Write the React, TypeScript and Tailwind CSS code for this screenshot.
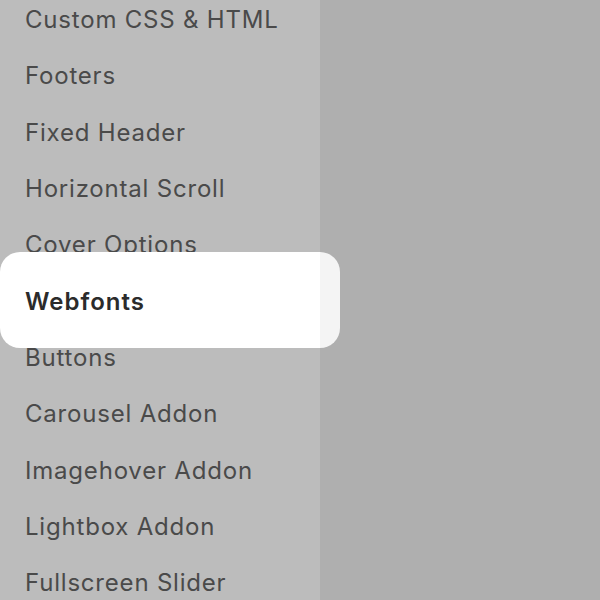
import React from "react";

const items = [
  "Custom CSS & HTML",
  "Footers",
  "Fixed Header",
  "Horizontal Scroll",
  "Cover Options",
  "Webfonts",
  "Buttons",
  "Carousel Addon",
  "Imagehover Addon",
  "Lightbox Addon",
  "Fullscreen Slider",
];

export default function App() {
  return (
    <div
      className="flex h-[600px] w-[600px] overflow-hidden bg-[#afafaf]"
      style={{ fontFamily: "Inter, 'Noto Sans', sans-serif" }}
    >
      <div className="relative w-[320px] shrink-0 bg-[#bcbcbc]">
        <ul className="mt-[-8px] flex flex-col">
          {items.map((t) => (
            <li
              key={t}
              className={`flex h-[56.3px] items-center pl-[25px] text-[24px] tracking-[0.8px] ${
                t === "Webfonts" ? "relative z-10 font-semibold tracking-[1px] text-[#2b2b2b]" : "text-[#4a4a4a]"
              }`}
            >
              {t}
            </li>
          ))}
        </ul>
        <div className="absolute left-0 top-[252px] h-[96px] w-[340px] rounded-[20px] bg-[linear-gradient(to_right,#ffffff_320px,#f4f4f4_320px)]" />
      </div>
      <div className="flex-1" />
    </div>
  );
}
